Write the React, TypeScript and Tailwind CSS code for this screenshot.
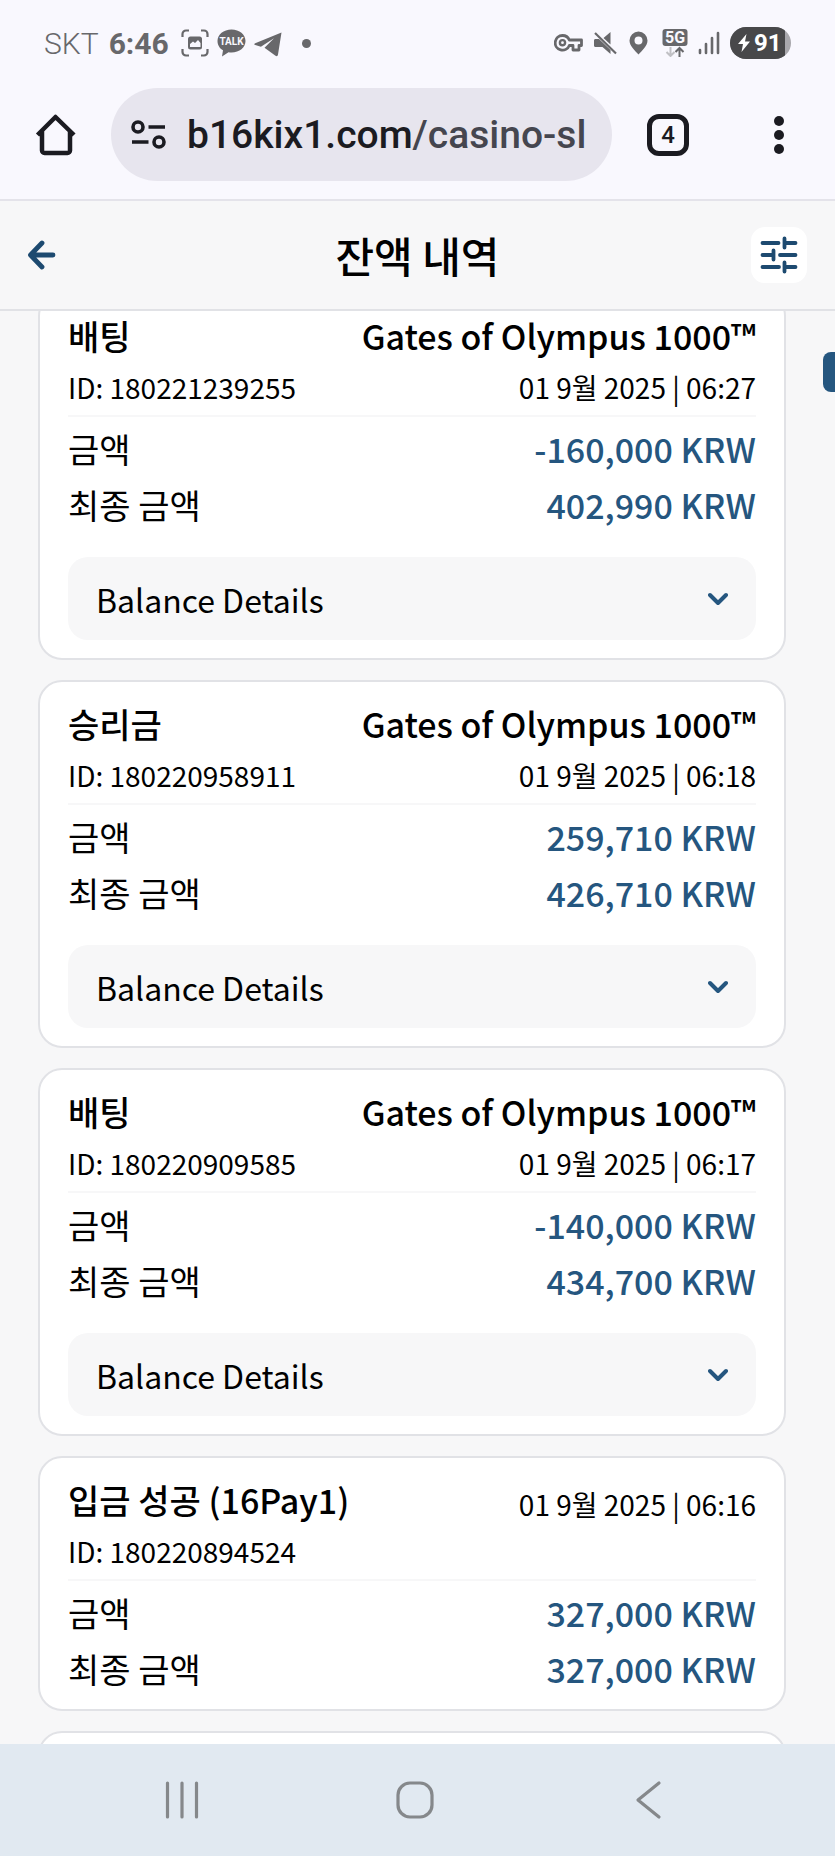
import { useState } from "react";
import type { ReactNode } from "react";

interface Transaction {
  id: string;
  type: string;
  game?: string;
  date: string;
  amount: string;
  finalAmount: string;
}

const transactions: Transaction[] = [
  {
    id: "180221239255",
    type: "배팅",
    game: "Gates of Olympus 1000™",
    date: "01 9월 2025 | 06:27",
    amount: "-160,000 KRW",
    finalAmount: "402,990 KRW",
  },
  {
    id: "180220958911",
    type: "승리금",
    game: "Gates of Olympus 1000™",
    date: "01 9월 2025 | 06:18",
    amount: "259,710 KRW",
    finalAmount: "426,710 KRW",
  },
  {
    id: "180220909585",
    type: "배팅",
    game: "Gates of Olympus 1000™",
    date: "01 9월 2025 | 06:17",
    amount: "-140,000 KRW",
    finalAmount: "434,700 KRW",
  },
  {
    id: "180220894524",
    type: "입금 성공 (16Pay1)",
    date: "01 9월 2025 | 06:16",
    amount: "327,000 KRW",
    finalAmount: "327,000 KRW",
  },
];

function StatusBar() {
  return (
    <div className="flex h-[86px] shrink-0 items-center justify-between pl-11 pr-11 font-['Roboto',sans-serif] text-[#68686b]">
      <div className="flex items-center">
        <span className="text-[30px] font-light">SKT</span>
        <span className="ml-2.5 text-[30px] font-bold">6:46</span>
        <svg className="ml-3 size-7" viewBox="0 0 28 28" fill="none">
          <path
            d="M1.5 8V5a3.5 3.5 0 0 1 3.5-3.5H8M20 1.5h3A3.5 3.5 0 0 1 26.5 5v3M26.5 20v3a3.5 3.5 0 0 1-3.5 3.5h-3M8 26.5H5A3.5 3.5 0 0 1 1.5 23v-3"
            stroke="currentColor"
            strokeWidth="2.2"
          />
          <rect x="7" y="7.5" width="14" height="13" rx="2.5" fill="currentColor" />
          <path d="M9 18v-3l3-2.5 2 1.5 3-3 2.5 3v4z" fill="#f9f8fe" />
        </svg>
        <svg className="ml-2 h-7 w-[29px]" viewBox="0 0 29 28">
          <path
            d="M14.5.5C6.6.5.5 5.500.5 12c0 4.200 2.300 7.500 5.500 9.300L5 27.500l6.500-4.300c1 .2 2 .3 3 .3 8 0 14-5 14-11.500S22.500.5 14.500.5z"
            fill="currentColor"
          />
          <text
            x="14.5"
            y="16"
            textAnchor="middle"
            fontSize="10"
            fontWeight="700"
            fill="#f9f8fe"
          >
            TALK
          </text>
        </svg>
        <svg className="ml-2 h-7 w-7" viewBox="0 0 28 28">
          <path
            d="M27.5 3.5 1.200 14.200c-1.300.6-1.200 1.500.1 1.900l5.600 1.700L20 9.300 10.500 18.800l11 8c1.300.8 2.200.3 2.500-1.200z"
            fill="currentColor"
          />
        </svg>
        <span className="ml-5 size-[9px] rounded-full bg-current" />
      </div>

      <div className="flex items-center">
        <svg className="h-[18px] w-[29px]" viewBox="0 0 29 18" fill="none">
          <path
            d="M8.5 1.500a7.300 7.300 0 1 0 6.800 10H19v4.500h6v-4.500h2.500V6H15.300A7.300 7.300 0 0 0 8.500 1.500z"
            stroke="currentColor"
            strokeWidth="2.8"
            strokeLinejoin="round"
          />
          <circle cx="8.5" cy="8.700" r="2.600" stroke="currentColor" strokeWidth="2.4" />
        </svg>
        <svg className="ml-2.5 h-6 w-6" viewBox="0 0 24 24">
          <path
            d="M17.500 1v12.500L10.500 7zM1 9.500C1 8.600 1.600 8 2.500 8H6l11.500 11v4L9.500 16h-7C1.600 16 1 15.400 1 14.500z"
            fill="currentColor"
          />
          <path d="M2 2l21 20.500" stroke="currentColor" strokeWidth="2.2" />
        </svg>
        <svg className="ml-3 h-6 w-[19px]" viewBox="0 0 19 24">
          <path
            fillRule="evenodd"
            d="M9.500.5A9 9 0 0 0 .5 9.500C.5 15 6 19.500 9.500 23.500 13 19.500 18.500 15 18.500 9.500a9 9 0 0 0-9-9zm0 5a4 4 0 1 1 0 8 4 4 0 0 1 0-8z"
            fill="currentColor"
          />
        </svg>
        <svg className="ml-3.5 h-7 w-[26px]" viewBox="0 0 26 28">
          <rect x=".5" width="25" height="17" rx="3" fill="currentColor" />
          <text
            x="13"
            y="14"
            textAnchor="middle"
            fontSize="16"
            fontWeight="700"
            fill="#f9f8fe"
          >
            5G
          </text>
          <path d="M8.500 18v9M4.500 23l4 4 4-4" stroke="#c0c0c4" strokeWidth="2" fill="none" />
          <path d="M17.500 28v-9.500M13.500 23l4-4 4 4" stroke="currentColor" strokeWidth="2" fill="none" />
        </svg>
        <svg className="ml-2.5 h-6 w-[22px]" viewBox="0 0 22 24">
          <path
            d="M2 19v3M8 13v9M14 7v15M20 2v20"
            stroke="currentColor"
            strokeWidth="2.6"
            strokeLinecap="round"
          />
        </svg>
        <span className="ml-2.5 flex h-8 w-[61px] overflow-hidden rounded-full bg-[#a9a8ad]">
          <span className="flex w-[55px] items-center gap-1 bg-[#48484a] pl-2 text-2xl font-bold text-white">
            <svg className="h-[18px] w-3" viewBox="0 0 12 18" fill="currentColor">
              <path d="M8.500 0 0 10h5L3.500 18 12 7.500H7z" />
            </svg>
            91
          </span>
        </span>
      </div>
    </div>
  );
}

function BrowserBar() {
  return (
    <div className="flex shrink-0 items-center border-b-2 border-[#e4e3ea] pb-[18px] pl-[34px] pr-[38px] pt-0.5 text-[#1b1b21]">
      <button type="button" aria-label="Home" className="shrink-0">
        <svg className="size-11" viewBox="0 0 44 44" fill="none">
          <path
            d="M3.500 22 21.500 4 40 22M8 18v19.500a2.500 2.500 0 0 0 2.500 2.500h23a2.500 2.500 0 0 0 2.500-2.500V18"
            stroke="currentColor"
            strokeWidth="4.500"
            strokeLinejoin="round"
          />
        </svg>
      </button>
      <button
        type="button"
        aria-label="Address"
        className="ml-[33px] flex h-[93px] min-w-0 flex-1 items-center overflow-hidden rounded-full bg-[#e7e5ee] pl-5 pr-[18px]"
      >
        <svg
          className="h-8 w-9 shrink-0"
          viewBox="0 0 36 32"
          fill="none"
          stroke="currentColor"
          strokeWidth="3.6"
        >
          <circle cx="7" cy="8" r="5" />
          <circle cx="28" cy="23" r="5" />
          <path d="M17.500 8H34M1 23h16.500" />
        </svg>
        <span className="ml-5 min-w-0 flex-1 overflow-hidden whitespace-nowrap text-left font-['Roboto',sans-serif] text-[39px] font-medium leading-[60px] text-[#45464f]">
          <span className="text-[#1b1b21]">b16kix1.com</span>/casino-sl
        </span>
      </button>
      <button
        type="button"
        aria-label="Tabs"
        className="ml-[35px] flex size-[42px] shrink-0 items-center justify-center rounded-xl border-5 border-current font-['Roboto',sans-serif] text-2xl font-medium"
      >
        4
      </button>
      <button
        type="button"
        aria-label="Menu"
        className="ml-[72px] flex w-9 shrink-0 flex-col items-center gap-1"
      >
        <span className="size-2.5 rounded-full bg-current" />
        <span className="size-2.5 rounded-full bg-current" />
        <span className="size-2.5 rounded-full bg-current" />
      </button>
    </div>
  );
}

function PageHeader() {
  return (
    <header className="flex h-[110px] shrink-0 items-center justify-between border-b-2 border-[#e1e2e6] px-7 text-[#1d4a70]">
      <a href="#back" aria-label="Back" className="flex w-14">
        <svg className="h-[30px] w-7" viewBox="0 0 28 30" fill="none">
          <path
            d="M25 15H3M14 3 2.500 15 14 27"
            stroke="currentColor"
            strokeWidth="4.800"
            strokeLinecap="round"
            strokeLinejoin="round"
          />
        </svg>
      </a>
      <h1 className="text-[42px] font-medium leading-[60px] text-black">잔액 내역</h1>
      <button
        type="button"
        aria-label="Filter"
        className="flex size-14 items-center justify-center rounded-[14px] bg-white"
      >
        <svg className="size-[38px]" viewBox="0 0 38 38" fill="none">
          <path
            d="M2.500 7h16M24.500 2.500v9M24.500 7h11M2.500 19h11M13.500 14.500v9M20 19h15.500M2.500 31h16.500M24.500 26.500v9M24.500 31h11"
            stroke="currentColor"
            strokeWidth="3.800"
            strokeLinecap="round"
          />
        </svg>
      </button>
    </header>
  );
}

function AmountRow({ label, children }: { label: string; children: ReactNode }) {
  return (
    <div className="flex items-center justify-between leading-[56px]">
      <dt>{label}</dt>
      <dd className="font-medium text-[#25567f]">{children}</dd>
    </div>
  );
}

function TransactionCard({ item }: { item: Transaction }) {
  const [open, setOpen] = useState(false);

  return (
    <article
      className={`rounded-[24px] border-2 border-[#e1e2e6] bg-white px-7 pt-4 text-[34px] ${
        item.game ? "pb-[18px]" : "pb-3"
      }`}
    >
      <div className="flex justify-between border-b-2 border-[#f7f7f8] pb-[3px]">
        <div>
          <h2 className="font-medium leading-[52px]">{item.type}</h2>
          <p className="text-[28px] leading-[50px]">ID: {item.id}</p>
        </div>
        <div className="text-right">
          {item.game && <p className="font-medium leading-[52px]">{item.game}</p>}
          <p className={`text-[28px] ${item.game ? "leading-[50px]" : "leading-[60px]"}`}>
            {item.date}
          </p>
        </div>
      </div>
      <dl className="pt-1">
        <AmountRow label="금액">{item.amount}</AmountRow>
        <AmountRow label="최종 금액">{item.finalAmount}</AmountRow>
      </dl>
      {item.game && (
        <button
          type="button"
          aria-expanded={open}
          onClick={() => setOpen(!open)}
          className="mt-6 flex h-[83px] w-full items-center justify-between rounded-[20px] bg-[#f7f7f8] px-7 text-[32px]"
        >
          Balance Details
          <svg
            className={`h-5 w-5 text-[#25567f] ${open ? "rotate-180" : ""}`}
            viewBox="0 0 20 20"
            fill="none"
          >
            <path
              d="M2 6l8 8 8-8"
              stroke="currentColor"
              strokeWidth="4"
              strokeLinecap="round"
              strokeLinejoin="round"
            />
          </svg>
        </button>
      )}
    </article>
  );
}

function NavigationBar() {
  return (
    <nav className="grid h-28 shrink-0 grid-cols-3 items-center bg-[#e1e9f1] pl-[65px] pr-[69px] text-[#85888b]">
      <button type="button" aria-label="Recents" className="flex justify-center">
        <svg className="size-10" viewBox="0 0 40 40">
          <path
            d="M5.500 3v34M20 3v34M34.500 3v34"
            stroke="currentColor"
            strokeWidth="3.2"
            strokeLinecap="round"
          />
        </svg>
      </button>
      <button type="button" aria-label="Home screen" className="flex justify-center">
        <svg className="size-10" viewBox="0 0 40 40" fill="none">
          <rect x="3" y="3" width="34" height="34" rx="12" stroke="currentColor" strokeWidth="3.2" />
        </svg>
      </button>
      <button type="button" aria-label="Go back" className="flex justify-center">
        <svg className="size-10" viewBox="0 0 40 40" fill="none">
          <path
            d="M30 3 9 20l21 17"
            stroke="currentColor"
            strokeWidth="3.2"
            strokeLinecap="round"
            strokeLinejoin="round"
          />
        </svg>
      </button>
    </nav>
  );
}

export default function App() {
  return (
    <div className="flex h-screen flex-col bg-[#f9f8fe] font-['Noto_Sans_CJK_KR',sans-serif] text-black">
      <StatusBar />
      <BrowserBar />
      <div className="flex min-h-0 flex-1 flex-col bg-[#f7f7f8]">
        <PageHeader />
        <main className="relative min-h-0 flex-1 overflow-hidden pl-[38px] pr-[49px]">
          {/* list is scrolled a little past the top of the first card */}
          <div className="-mt-[19px] flex flex-col gap-5">
            {transactions.map((item) => (
              <TransactionCard key={item.id} item={item} />
            ))}
            <div className="h-64 rounded-[24px] border-2 border-[#e1e2e6] bg-white" />
          </div>
          <div className="absolute right-0 top-[41px] h-10 w-3 rounded-l-lg bg-[#25567f]" />
        </main>
      </div>
      <NavigationBar />
    </div>
  );
}
